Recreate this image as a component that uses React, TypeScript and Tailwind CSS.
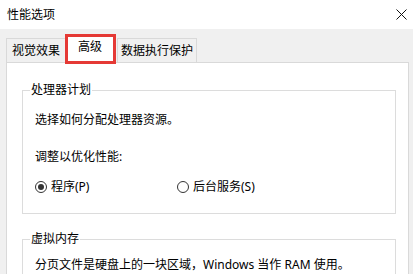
const font = { fontFamily: '"Noto Sans", "Noto Sans CJK SC", sans-serif' }

function Radio({ checked, label }: { checked?: boolean; label: string }) {
  return (
    <label className="flex items-center gap-[4px]">
      <span className="flex h-[12px] w-[12px] items-center justify-center rounded-full border border-[#333]">
        {checked && <span className="h-[6px] w-[6px] rounded-full bg-[#333]" />}
      </span>
      <span>{label}</span>
    </label>
  )
}

function Group({ title, children }: { title: string; children: React.ReactNode }) {
  return (
    <fieldset className="mr-[12px] shrink-0 border border-[#dcdcdc] pl-[12px]">
      <legend className="ml-[-5px] px-[1px] leading-[16px]">{title}</legend>
      {children}
    </fieldset>
  )
}

export default function App() {
  return (
    <div
      className="flex h-[274px] w-[413px] flex-col overflow-hidden bg-white text-[12px] leading-[16px] text-[#000]"
      style={font}
    >
      <div className="flex h-[29px] shrink-0 items-center justify-between pl-[7px] pr-[6px]">
        <span>性能选项</span>
        <svg width="11" height="11" viewBox="0 0 11 11" className="mt-[-1px]">
          <path d="M0.5 0.5 L10.5 10.5 M10.5 0.5 L0.5 10.5" stroke="#111" strokeWidth="1" />
        </svg>
      </div>

      <div className="flex shrink-0 grow flex-col bg-[#f0f0f0] pl-[6px] pr-[4px]">
        <div className="flex h-[33px] shrink-0 items-end">
          <div className="flex h-[24px] w-[60px] items-center justify-center border border-b-0 border-[#d9d9d9]">
            视觉效果
          </div>
          <div className="relative z-10 mb-[-1px] flex h-[29px] w-[48px] items-center justify-center border border-b-0 border-[#d9d9d9] bg-white pb-[4px]">
            高级
            <span className="absolute left-[-2px] right-[-3px] top-[-1px] bottom-[-1px] border-[3px] border-[#e53935]" />
          </div>
          <div className="ml-[3px] flex h-[24px] w-[80px] items-center justify-center border border-b-0 border-[#d9d9d9]">
            数据执行保护
          </div>
        </div>

        <div className="flex shrink-0 grow flex-col border border-[#d9d9d9] bg-white pl-[15px] pt-[19px]">
          <Group title="处理器计划">
            <div className="mt-[14px]">选择如何分配处理器资源。</div>
            <div className="mt-[21px]">调整以优化性能:</div>
            <div className="mt-[14px] mb-[18px] flex">
              <div className="w-[142px]">
                <Radio checked label="程序(P)" />
              </div>
              <Radio label="后台服务(S)" />
            </div>
          </Group>
          <div className="h-[17px] shrink-0" />
          <Group title="虚拟内存">
            <div className="mt-[10px]">分页文件是硬盘上的一块区域，Windows 当作 RAM 使用。</div>
            <div className="h-[30px]" />
          </Group>
        </div>
      </div>
    </div>
  )
}
